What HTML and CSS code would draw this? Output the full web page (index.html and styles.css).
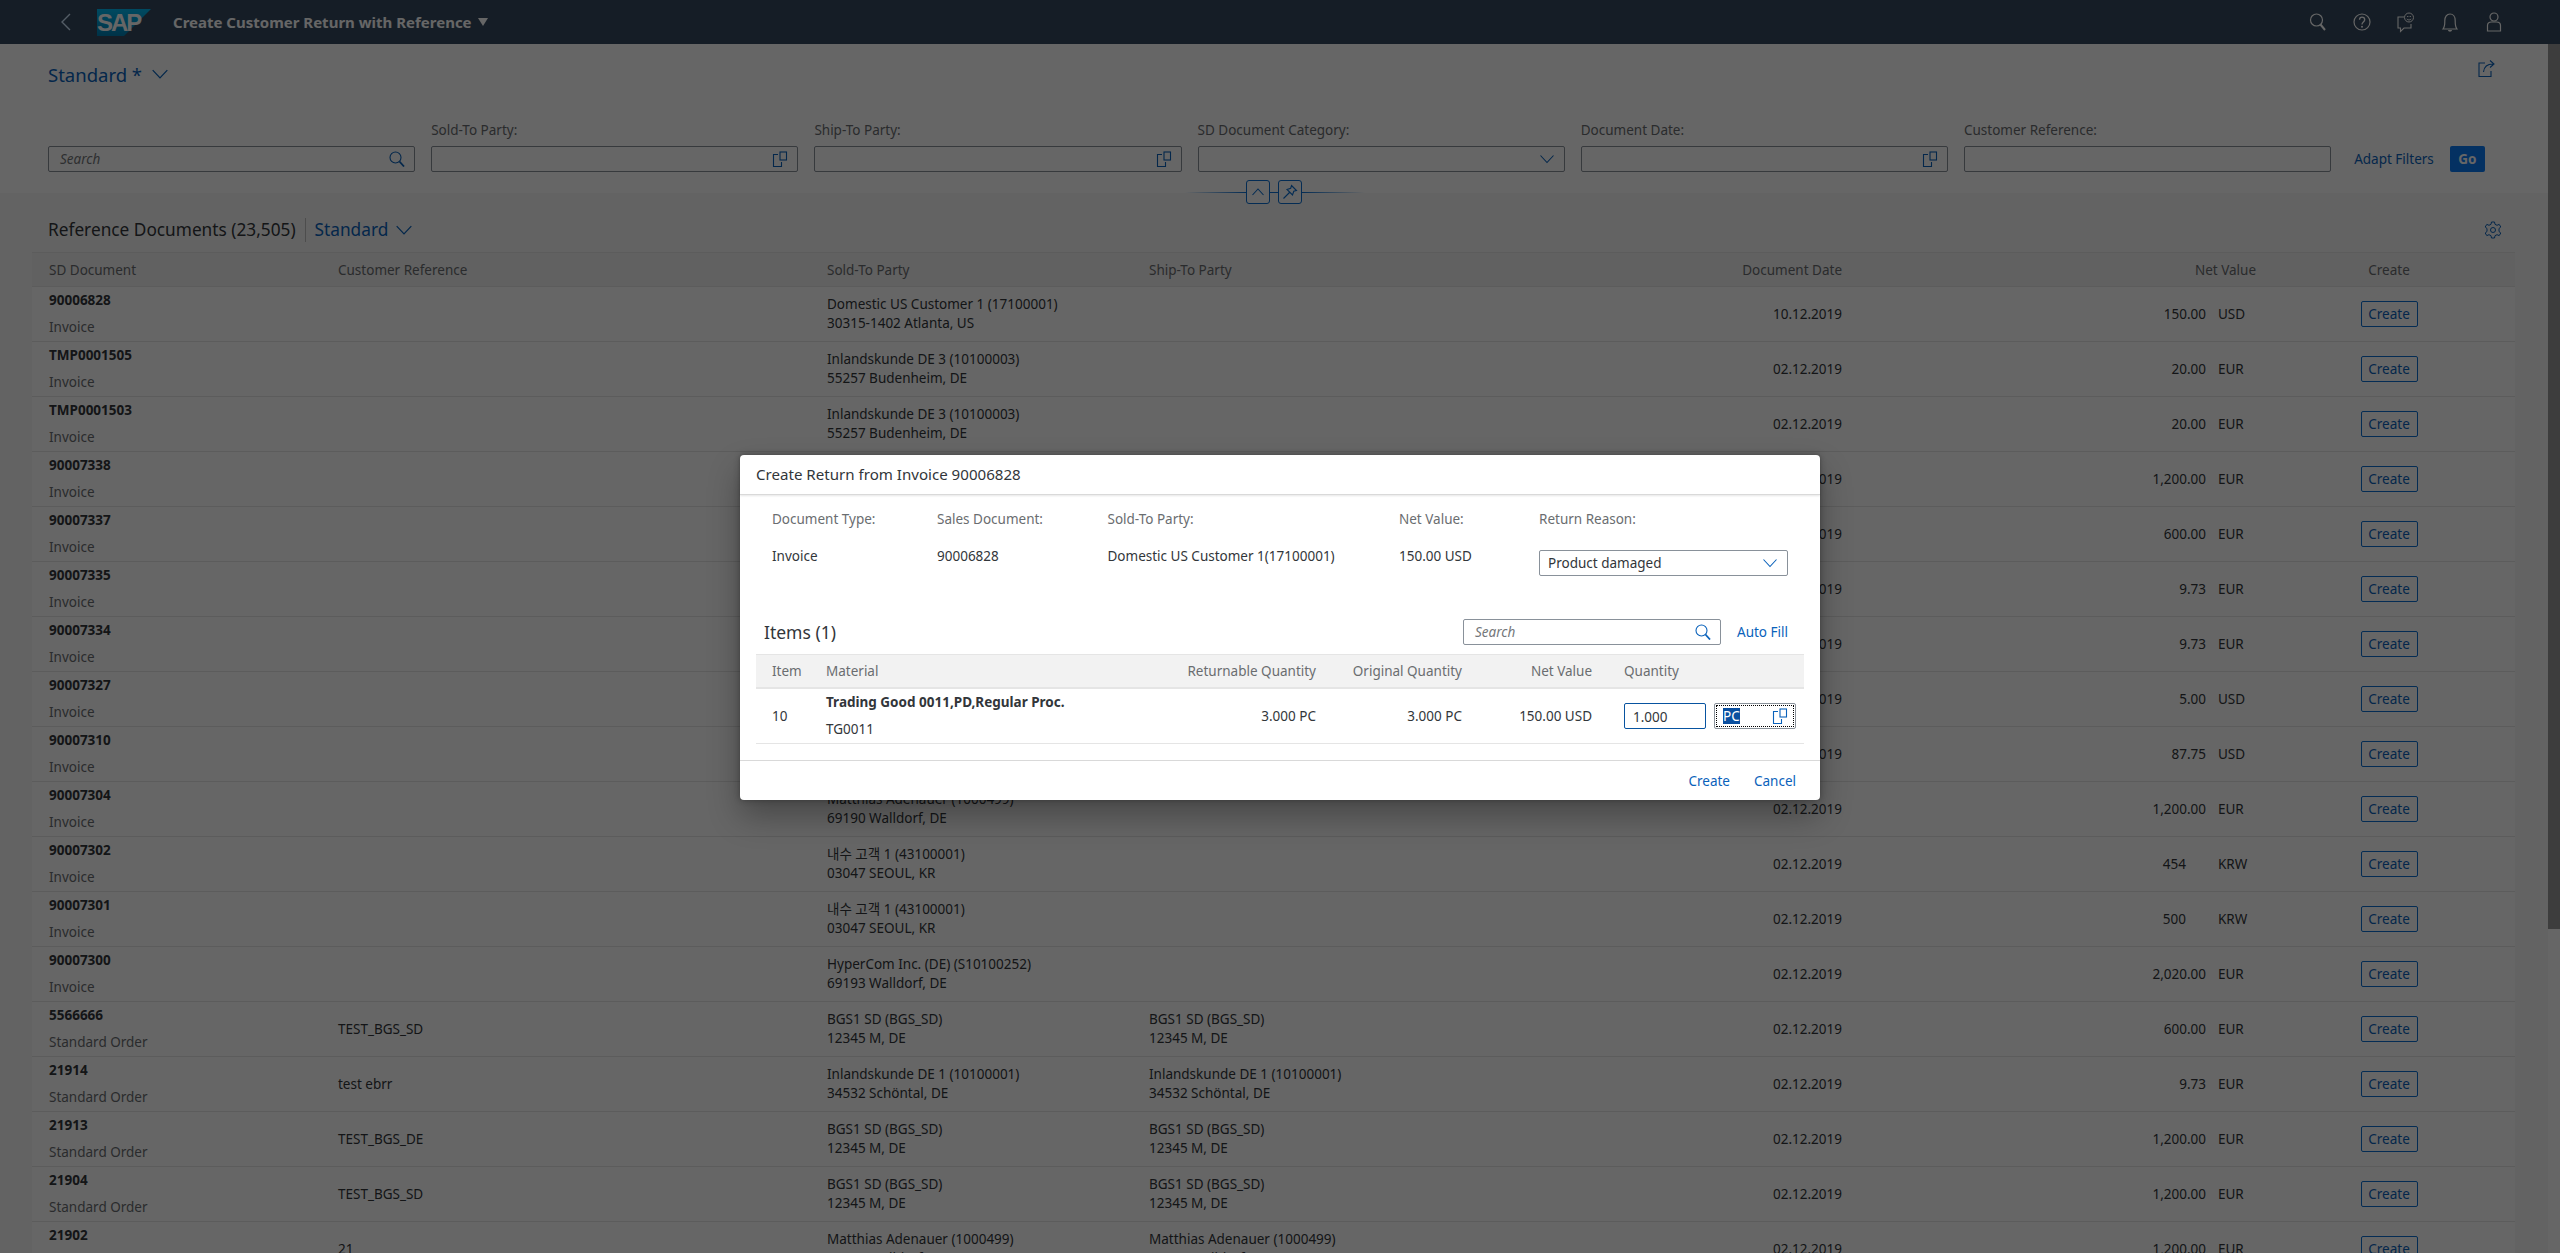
FILE: index.html
```html
<!DOCTYPE html>
<html lang="en">
<head>
  <meta charset="UTF-8" />
  <title>Create Customer Return with Reference</title>
  <link rel="stylesheet" href="styles.css">
</head>
<body>
  <svg class="sprites" width="0" height="0">
    <symbol id="i-search" viewBox="0 0 16 16"><circle cx="6.5" cy="6.5" r="5.5" fill="none" stroke="currentColor" stroke-width="1.1"/><path d="M10.5 10.5 15 15.5" stroke="currentColor" stroke-width="1.8" fill="none"/></symbol>
    <symbol id="i-vh" viewBox="0 0 16 16"><path d="M6 3.5H1.500V15.500H9.500V11" fill="none" stroke="currentColor" stroke-width="1.1"/><rect x="8" y="1" width="6.500" height="8" fill="none" stroke="currentColor" stroke-width="1.1"/></symbol>
    <symbol id="i-down" viewBox="0 0 16 16"><path d="M1.500 4.500 8 11.500 14.500 4.500" fill="none" stroke="currentColor" stroke-width="1.1"/></symbol>
  </svg>

  <header class="shell">
    <svg class="shell-back" width="12" height="20" viewBox="0 0 12 20"><path d="M10 2 2 10 10 18" fill="none" stroke="currentColor" stroke-width="1.4"/></svg>
    <div class="sap-logo">
      <svg width="54" height="27" viewBox="0 0 54 27"><defs><linearGradient id="sap-fill" x1="0" y1="0" x2="0" y2="1"><stop offset="0" stop-color="#00b8f1"/><stop offset="1" stop-color="#007fb3"/></linearGradient></defs><polygon points="0,0 54,0 27,27 0,27" fill="url(#sap-fill)"/></svg>
      <span class="sap-text">SAP</span>
    </div>
    <span class="shell-title">Create Customer Return with Reference</span>
    <svg class="shell-caret" width="10" height="8" viewBox="0 0 10 8"><polygon points="0,0 10,0 5,8" fill="currentColor"/></svg>
    <div class="shell-icons">
      <svg width="18" height="22" viewBox="0 0 18 22"><circle cx="7.500" cy="9" r="6" fill="none" stroke="currentColor" stroke-width="1.200"/><path d="M11.500 13.500 16 19" stroke="currentColor" stroke-width="2" fill="none"/></svg>
      <svg width="18" height="22" viewBox="0 0 18 22"><circle cx="9" cy="11" r="8" fill="none" stroke="currentColor" stroke-width="1.200"/><path d="M6.500 8.800C6.600 7 7.700 6.200 9 6.200c1.600 0 2.700 1 2.700 2.500 0 2.200-2.700 2.400-2.700 4.700" fill="none" stroke="currentColor" stroke-width="1.300"/><circle cx="9" cy="15.700" r="1" fill="currentColor"/></svg>
      <svg width="18" height="22" viewBox="0 0 18 22"><path d="M7 6H1V17H3.500V20.500L7 17H14V13" fill="none" stroke="currentColor" stroke-width="1.100"/><circle cx="12" cy="6.500" r="4.500" fill="#354a5f" stroke="currentColor" stroke-width="1"/><path d="M9.800 8c1.400 1.300 3 1.300 4.400 0M10 5.500h1.400M12.600 5.500h1.400" fill="none" stroke="currentColor" stroke-width=".9"/></svg>
      <svg width="18" height="22" viewBox="0 0 18 22"><path d="M2 18C4 15.500 3.800 12.500 3.800 9.500 3.800 6 5.800 3 9 3s5.200 3 5.200 6.500c0 3-.2 6 1.800 8.500Z" fill="none" stroke="currentColor" stroke-width="1.200"/><path d="M7 19c0 2.300 4 2.300 4 0" fill="currentColor"/></svg>
      <svg width="18" height="22" viewBox="0 0 18 22"><circle cx="9" cy="6" r="4" fill="none" stroke="currentColor" stroke-width="1.200"/><path d="M2.500 20V14.500C2.500 12 4.500 11 6.500 11H11.500C13.500 11 15.500 12 15.500 14.500V20Z" fill="none" stroke="currentColor" stroke-width="1.200"/></svg>
    </div>
  </header>

  <main class="page">
    <section class="filterbar">
      <div class="variant-row">
        <span class="variant">Standard *</span>
        <svg class="ic-blue variant-chev"><use href="#i-down"/></svg>
        <svg class="share" width="18" height="20" viewBox="0 0 18 20"><path d="M7 5H1V18.500H13V13" fill="none" stroke="currentColor" stroke-width="1.100"/><path d="M5.500 14C6 9 9 6 15 6M12 2.500 16 6 12 9.500" fill="none" stroke="currentColor" stroke-width="1.100"/></svg>
      </div>
      <div class="filters">
        <div class="filter">
          <label>&nbsp;</label>
          <div class="field"><span class="placeholder">Search</span><svg class="ic-blue ic14"><use href="#i-search"/></svg></div>
        </div>
        <div class="filter">
          <label>Sold-To Party:</label>
          <div class="field"><svg class="ic-blue ic14"><use href="#i-vh"/></svg></div>
        </div>
        <div class="filter">
          <label>Ship-To Party:</label>
          <div class="field"><svg class="ic-blue ic14"><use href="#i-vh"/></svg></div>
        </div>
        <div class="filter">
          <label>SD Document Category:</label>
          <div class="field"><svg class="ic-blue ic14"><use href="#i-down"/></svg></div>
        </div>
        <div class="filter">
          <label>Document Date:</label>
          <div class="field"><svg class="ic-blue ic14"><use href="#i-vh"/></svg></div>
        </div>
        <div class="filter">
          <label>Customer Reference:</label>
          <div class="field"></div>
        </div>
        <div class="filter-actions">
          <a class="link">Adapt Filters</a>
          <button class="go">Go</button>
        </div>
      </div>
      <div class="collapse">
        <span class="collapse-line left"></span>
        <button class="collapse-btn"><svg width="14" height="10" viewBox="0 0 14 10"><path d="M1.500 8 7 2 12.500 8" fill="none" stroke="currentColor" stroke-width="1.100"/></svg></button>
        <span class="collapse-line mid"></span>
        <button class="collapse-btn"><svg width="16" height="16" viewBox="0 0 16 16"><path d="M9.500 1.500 14.500 6.500 11.800 7.300 10.500 11 5 5.500 8.700 4.200ZM7.500 8.500 1.500 14.500" fill="none" stroke="currentColor" stroke-width="1.100"/></svg></button>
        <span class="collapse-line right"></span>
      </div>
    </section>

    <section class="docs">
      <div class="docs-toolbar">
        <h2 class="docs-title">Reference Documents (23,505)</h2>
        <span class="docs-sep"></span>
        <span class="docs-variant">Standard</span>
        <svg class="ic-blue docs-chev"><use href="#i-down"/></svg>
        <svg class="gear" width="18" height="18" viewBox="0 0 18 18"><circle cx="9" cy="9" r="2.500" fill="none" stroke="currentColor" stroke-width="1"/><path d="M7.500 1H10.500L11 3.300 13 4.300 15.200 3.400 16.800 6 15 7.500V10.500L16.800 12 15.200 14.600 13 13.700 11 14.700 10.500 17H7.500L7 14.700 5 13.700 2.800 14.600 1.200 12 3 10.500V7.500L1.200 6 2.800 3.400 5 4.300 7 3.300Z" fill="none" stroke="currentColor" stroke-width="1"/></svg>
      </div>

      <div class="table">
        <div class="tr th">
          <div class="td">SD Document</div><div class="td">Customer Reference</div><div class="td">Sold-To Party</div><div class="td">Ship-To Party</div><div class="td right">Document Date</div><div class="td right">Net Value</div><div class="td center">Create</div>
        </div>

        <div class="tr">
          <div class="td doc"><b>90006828</b><span>Invoice</span></div><div class="td"></div>
          <div class="td party">Domestic US Customer 1 (17100001)<br>30315-1402 Atlanta, US</div><div class="td party"></div>
          <div class="td right">10.12.2019</div>
          <div class="td value"><span class="num">150.00</span><span class="cur">USD</span></div>
          <div class="td center"><button class="create">Create</button></div>
        </div>
        <div class="tr">
          <div class="td doc"><b>TMP0001505</b><span>Invoice</span></div><div class="td"></div>
          <div class="td party">Inlandskunde DE 3 (10100003)<br>55257 Budenheim, DE</div><div class="td party"></div>
          <div class="td right">02.12.2019</div>
          <div class="td value"><span class="num">20.00</span><span class="cur">EUR</span></div>
          <div class="td center"><button class="create">Create</button></div>
        </div>
        <div class="tr">
          <div class="td doc"><b>TMP0001503</b><span>Invoice</span></div><div class="td"></div>
          <div class="td party">Inlandskunde DE 3 (10100003)<br>55257 Budenheim, DE</div><div class="td party"></div>
          <div class="td right">02.12.2019</div>
          <div class="td value"><span class="num">20.00</span><span class="cur">EUR</span></div>
          <div class="td center"><button class="create">Create</button></div>
        </div>
        <div class="tr">
          <div class="td doc"><b>90007338</b><span>Invoice</span></div><div class="td"></div>
          <div class="td party"></div><div class="td party"></div>
          <div class="td right">02.12.2019</div>
          <div class="td value"><span class="num">1,200.00</span><span class="cur">EUR</span></div>
          <div class="td center"><button class="create">Create</button></div>
        </div>
        <div class="tr">
          <div class="td doc"><b>90007337</b><span>Invoice</span></div><div class="td"></div>
          <div class="td party"></div><div class="td party"></div>
          <div class="td right">02.12.2019</div>
          <div class="td value"><span class="num">600.00</span><span class="cur">EUR</span></div>
          <div class="td center"><button class="create">Create</button></div>
        </div>
        <div class="tr">
          <div class="td doc"><b>90007335</b><span>Invoice</span></div><div class="td"></div>
          <div class="td party"></div><div class="td party"></div>
          <div class="td right">02.12.2019</div>
          <div class="td value"><span class="num">9.73</span><span class="cur">EUR</span></div>
          <div class="td center"><button class="create">Create</button></div>
        </div>
        <div class="tr">
          <div class="td doc"><b>90007334</b><span>Invoice</span></div><div class="td"></div>
          <div class="td party"></div><div class="td party"></div>
          <div class="td right">02.12.2019</div>
          <div class="td value"><span class="num">9.73</span><span class="cur">EUR</span></div>
          <div class="td center"><button class="create">Create</button></div>
        </div>
        <div class="tr">
          <div class="td doc"><b>90007327</b><span>Invoice</span></div><div class="td"></div>
          <div class="td party"></div><div class="td party"></div>
          <div class="td right">02.12.2019</div>
          <div class="td value"><span class="num">5.00</span><span class="cur">USD</span></div>
          <div class="td center"><button class="create">Create</button></div>
        </div>
        <div class="tr">
          <div class="td doc"><b>90007310</b><span>Invoice</span></div><div class="td"></div>
          <div class="td party"></div><div class="td party"></div>
          <div class="td right">02.12.2019</div>
          <div class="td value"><span class="num">87.75</span><span class="cur">USD</span></div>
          <div class="td center"><button class="create">Create</button></div>
        </div>
        <div class="tr">
          <div class="td doc"><b>90007304</b><span>Invoice</span></div><div class="td"></div>
          <div class="td party">Matthias Adenauer (1000499)<br>69190 Walldorf, DE</div><div class="td party"></div>
          <div class="td right">02.12.2019</div>
          <div class="td value"><span class="num">1,200.00</span><span class="cur">EUR</span></div>
          <div class="td center"><button class="create">Create</button></div>
        </div>
        <div class="tr">
          <div class="td doc"><b>90007302</b><span>Invoice</span></div><div class="td"></div>
          <div class="td party">내수 고객 1 (43100001)<br>03047 SEOUL, KR</div><div class="td party"></div>
          <div class="td right">02.12.2019</div>
          <div class="td value"><span class="num whole">454</span><span class="cur">KRW</span></div>
          <div class="td center"><button class="create">Create</button></div>
        </div>
        <div class="tr">
          <div class="td doc"><b>90007301</b><span>Invoice</span></div><div class="td"></div>
          <div class="td party">내수 고객 1 (43100001)<br>03047 SEOUL, KR</div><div class="td party"></div>
          <div class="td right">02.12.2019</div>
          <div class="td value"><span class="num whole">500</span><span class="cur">KRW</span></div>
          <div class="td center"><button class="create">Create</button></div>
        </div>
        <div class="tr">
          <div class="td doc"><b>90007300</b><span>Invoice</span></div><div class="td"></div>
          <div class="td party">HyperCom Inc. (DE) (S10100252)<br>69193 Walldorf, DE</div><div class="td party"></div>
          <div class="td right">02.12.2019</div>
          <div class="td value"><span class="num">2,020.00</span><span class="cur">EUR</span></div>
          <div class="td center"><button class="create">Create</button></div>
        </div>
        <div class="tr">
          <div class="td doc"><b>5566666</b><span>Standard Order</span></div><div class="td">TEST_BGS_SD</div>
          <div class="td party">BGS1 SD (BGS_SD)<br>12345 M, DE</div><div class="td party">BGS1 SD (BGS_SD)<br>12345 M, DE</div>
          <div class="td right">02.12.2019</div>
          <div class="td value"><span class="num">600.00</span><span class="cur">EUR</span></div>
          <div class="td center"><button class="create">Create</button></div>
        </div>
        <div class="tr">
          <div class="td doc"><b>21914</b><span>Standard Order</span></div><div class="td">test ebrr</div>
          <div class="td party">Inlandskunde DE 1 (10100001)<br>34532 Schöntal, DE</div><div class="td party">Inlandskunde DE 1 (10100001)<br>34532 Schöntal, DE</div>
          <div class="td right">02.12.2019</div>
          <div class="td value"><span class="num">9.73</span><span class="cur">EUR</span></div>
          <div class="td center"><button class="create">Create</button></div>
        </div>
        <div class="tr">
          <div class="td doc"><b>21913</b><span>Standard Order</span></div><div class="td">TEST_BGS_DE</div>
          <div class="td party">BGS1 SD (BGS_SD)<br>12345 M, DE</div><div class="td party">BGS1 SD (BGS_SD)<br>12345 M, DE</div>
          <div class="td right">02.12.2019</div>
          <div class="td value"><span class="num">1,200.00</span><span class="cur">EUR</span></div>
          <div class="td center"><button class="create">Create</button></div>
        </div>
        <div class="tr">
          <div class="td doc"><b>21904</b><span>Standard Order</span></div><div class="td">TEST_BGS_SD</div>
          <div class="td party">BGS1 SD (BGS_SD)<br>12345 M, DE</div><div class="td party">BGS1 SD (BGS_SD)<br>12345 M, DE</div>
          <div class="td right">02.12.2019</div>
          <div class="td value"><span class="num">1,200.00</span><span class="cur">EUR</span></div>
          <div class="td center"><button class="create">Create</button></div>
        </div>
        <div class="tr">
          <div class="td doc"><b>21902</b><span>Standard Order</span></div><div class="td">21</div>
          <div class="td party">Matthias Adenauer (1000499)<br>69190 Walldorf, DE</div><div class="td party">Matthias Adenauer (1000499)<br>69190 Walldorf, DE</div>
          <div class="td right">02.12.2019</div>
          <div class="td value"><span class="num">1,200.00</span><span class="cur">EUR</span></div>
          <div class="td center"><button class="create">Create</button></div>
        </div>
      </div>
    </section>
  </main>

  <div class="scrollbar"><div class="scroll-thumb"></div></div>
  <div class="backdrop"></div>

  <div class="dialog">
    <div class="dlg-header">Create Return from Invoice 90006828</div>
    <div class="dlg-body">
      <div class="dlg-form">
        <div class="dlg-col c1"><span class="dlg-label">Document Type:</span><span class="dlg-val">Invoice</span></div>
        <div class="dlg-col c2"><span class="dlg-label">Sales Document:</span><span class="dlg-val">90006828</span></div>
        <div class="dlg-col c3"><span class="dlg-label">Sold-To Party:</span><span class="dlg-val">Domestic US Customer 1(17100001)</span></div>
        <div class="dlg-col c4"><span class="dlg-label">Net Value:</span><span class="dlg-val">150.00 USD</span></div>
        <div class="dlg-col c5">
          <span class="dlg-label">Return Reason:</span>
          <div class="dlg-select"><span>Product damaged</span><svg class="ic-dlg ic14"><use href="#i-down"/></svg></div>
        </div>
      </div>
      <div class="items-bar">
        <span class="items-title">Items (1)</span>
        <div class="dlg-search"><span class="placeholder">Search</span><svg class="ic-dlg ic14"><use href="#i-search"/></svg></div>
        <a class="dlg-link">Auto Fill</a>
      </div>
      <div class="items">
        <div class="it-row it-head">
          <div>Item</div><div>Material</div><div class="right">Returnable Quantity</div><div class="right">Original Quantity</div><div class="right">Net Value</div><div>Quantity</div>
        </div>
        <div class="it-row">
          <div>10</div>
          <div class="it-mat"><b>Trading Good 0011,PD,Regular Proc.</b><span>TG0011</span></div>
          <div class="right">3.000 PC</div>
          <div class="right">3.000 PC</div>
          <div class="right">150.00 USD</div>
          <div class="it-inputs">
            <div class="qty">1.000</div>
            <div class="unit"><div class="unit-focus"><span class="unit-sel">PC</span><svg class="ic-dlg ic14"><use href="#i-vh"/></svg></div></div>
          </div>
        </div>
      </div>
    </div>
    <div class="dlg-footer">
      <a class="dlg-link">Create</a>
      <a class="dlg-link">Cancel</a>
    </div>
  </div>
</body>
</html>
```

FILE: styles.css
```css
* {
  box-sizing: border-box;
}

html, body {
  margin: 0;
  height: 1253px;
  overflow: hidden;
}

body {
  font-family: "Noto Sans", "Noto Sans CJK KR", sans-serif;
  font-size: 13.5px;
  color: #32363a;
  background-color: #f7f7f7;
  position: relative;
}

.sprites {
  position: absolute;
}

b {
  font-weight: 700;
}

.right { text-align: right; }
.center { text-align: center; }

.ic-blue {
  color: #0a62bb;
  fill: none;
}

.ic-dlg {
  color: #0a62bb;
}

.ic14 {
  width: 16px;
  height: 16px;
  flex: none;
}

/* shell */
.shell {
  height: 44px;
  background-color: #354a5f;
  color: #d1e8ff;
  display: flex;
  align-items: center;
  padding-left: 60px;
}

.shell-back {
  flex: none;
  margin-right: 25px;
}

.sap-logo {
  position: relative;
  width: 54px;
  height: 27px;
  flex: none;
  margin-right: 22px;
}

.sap-logo svg {
  display: block;
}

.sap-text {
  position: absolute;
  left: 0;
  top: 1px;
  font: 700 24px/25px "Liberation Sans", sans-serif;
  letter-spacing: -2px;
  color: #fff;
}

.shell-title {
  font-weight: 700;
  font-size: 15px;
  color: #fff;
}

.shell-caret {
  margin-left: 6px;
  color: #fff;
}

.shell-icons {
  margin-left: auto;
  display: flex;
  gap: 26px;
  padding-right: 57px;
  color: #fff;
}

/* filter bar */
.filterbar {
  height: 149px;
  background-color: #fff;
  padding: 0 48px;
  position: relative;
}

.variant-row {
  height: 60px;
  display: flex;
  align-items: center;
}

.variant {
  font-size: 18.5px;
  color: #0a62bb;
}

.variant-chev {
  width: 18px;
  height: 18px;
  margin-left: 9px;
}

.share {
  color: #0a62bb;
  margin-left: auto;
  margin-right: 16px;
  margin-top: -12px;
}

.filters {
  display: flex;
  align-items: flex-end;
  gap: 16px;
  margin-top: 16px;
}

.filter {
  width: 367.200px;
  flex: none;
}

.filter label {
  display: block;
  height: 26px;
  font-size: 13.5px;
  line-height: 20px;
  color: #6a6d70;
}

.field {
  height: 26px;
  border: 1px solid #89919a;
  border-radius: 2px;
  background-color: #fff;
  display: flex;
  align-items: center;
  justify-content: flex-end;
  padding: 0 9px;
}

.placeholder {
  font-style: italic;
  color: #74777a;
  margin-right: auto;
  padding-left: 2px;
}

.filter-actions {
  display: flex;
  align-items: center;
  gap: 16px;
  padding-left: 7px;
}

.link {
  color: #0a62bb;
}

.go {
  width: 35px;
  height: 26px;
  border: none;
  border-radius: 2px;
  padding: 0;
  background-color: #0a7af5;
  color: #fff;
  font: 700 13.5px "Noto Sans", sans-serif;
}

.collapse {
  position: absolute;
  left: 1185px;
  top: 136px;
  display: flex;
  align-items: center;
  width: 180px;
}

.collapse-line {
  height: 1px;
  flex: 1;
  background-color: #0a6ed1;
}

.collapse-line.left {
  flex: none;
  width: 61px;
  background: linear-gradient(to right, transparent, #0a6ed1);
}

.collapse-line.mid {
  flex: none;
  width: 8px;
}

.collapse-line.right {
  background: linear-gradient(to right, #0a6ed1, transparent);
}

.collapse-btn {
  width: 24px;
  height: 24px;
  padding: 0;
  flex: none;
  border: 1px solid #0a6ed1;
  border-radius: 3px;
  background-color: #fff;
  color: #0a6ed1;
  display: flex;
  align-items: center;
  justify-content: center;
}

/* table */
.docs-toolbar {
  height: 59px;
  display: flex;
  align-items: center;
  padding: 14px 48px 0;
}

.docs-title {
  margin: 0;
  font-size: 17.250px;
  font-weight: 400;
}

.docs-sep {
  width: 1px;
  height: 24px;
  background-color: #c0c0c0;
  margin: 0 9px;
}

.docs-variant {
  font-size: 17.250px;
  color: #0a62bb;
}

.docs-chev {
  width: 18px;
  height: 18px;
  margin-left: 7px;
}

.gear {
  margin-left: auto;
  margin-right: 10px;
  color: #0a62bb;
}

.table {
  margin-left: 32px;
  width: 2483px;
  border-top: 1px solid #e5e5e5;
}

.tr {
  display: grid;
  grid-template-columns: 289px 489px 322px 380px 347px 414px 232px;
  height: 55px;
  background-color: #fff;
  border-bottom: 1px solid #e5e5e5;
  align-items: center;
}

.th {
  height: 34px;
  background-color: #f2f2f2;
  color: #6a6d70;
  font-size: 13.5px;
}

.td {
  padding: 0 17px;
  white-space: nowrap;
}

.doc b,
.doc span {
  display: block;
  line-height: 27px;
}

.doc span {
  color: #6a6d70;
}

.party {
  line-height: 19px;
}

.value {
  display: flex;
  justify-content: flex-end;
  gap: 12px;
}

.cur {
  width: 38px;
}

.num.whole {
  padding-right: 20px;
}

.create {
  height: 26px;
  width: 57px;
  padding: 0;
  border: 1px solid #0a6ed1;
  border-radius: 2px;
  background-color: #fff;
  color: #0a62bb;
  font: 13.5px "Noto Sans", sans-serif;
}

.scrollbar {
  position: absolute;
  right: 0;
  top: 44px;
  bottom: 0;
  width: 12px;
  background-color: #fff;
}

.scroll-thumb {
  height: 885px;
  background-color: #9a9a9a;
}

/* dialog */
.backdrop {
  position: absolute;
  inset: 0;
  background-color: rgba(0, 0, 0, 0.6);
}

.dialog {
  position: absolute;
  left: 740px;
  top: 455px;
  width: 1080px;
  height: 345px;
  background-color: #fff;
  border-radius: 4px;
  box-shadow: 0 16px 32px rgba(0, 0, 0, 0.3), 0 0 6px rgba(0, 0, 0, 0.3);
  display: flex;
  flex-direction: column;
}

.dlg-header {
  height: 40px;
  padding: 0 16px 2px;
  display: flex;
  align-items: center;
  font-size: 15.100px;
  border-bottom: 1px solid #d9d9d9;
  box-shadow: 0 1px 2px rgba(0, 0, 0, 0.1);
}

.dlg-body {
  flex: 1;
}

.dlg-form {
  display: grid;
  grid-template-columns: 165px 170.500px 291.500px 140px 1fr;
  padding: 14px 32px 0;
  height: 114px;
}

.dlg-col {
  display: flex;
  flex-direction: column;
}

.dlg-label {
  line-height: 20px;
  color: #6a6d70;
  margin-bottom: 17px;
}

.dlg-val {
  line-height: 20px;
}

.dlg-select {
  width: 249px;
  height: 26px;
  border: 1px solid #89919a;
  border-radius: 2px;
  display: flex;
  align-items: center;
  justify-content: space-between;
  padding: 0 9px 0 8px;
  margin-top: 4px;
}

.items-bar {
  display: flex;
  align-items: center;
  height: 45px;
  padding: 0 32px 0 24px;
}

.items-title {
  font-size: 17.5px;
  margin-right: auto;
}

.dlg-search {
  width: 258px;
  height: 26px;
  border: 1px solid #89919a;
  border-radius: 2px;
  display: flex;
  align-items: center;
  padding: 0 9px;
}

.dlg-link {
  color: #0a62bb;
}

.items-bar .dlg-link {
  margin-left: 16px;
}

.items {
  margin: 0 16px;
}

.it-row {
  display: grid;
  grid-template-columns: 54px 300px 190px 146px 130px 1fr;
  align-items: center;
  height: 55px;
  padding-left: 16px;
  border-bottom: 1px solid #e5e5e5;
}

.it-head {
  height: 35px;
  background-color: #f2f2f2;
  color: #6a6d70;
  border-top: 1px solid #e5e5e5;
  border-bottom: 2px solid #e5e5e5;
}

.it-row > :last-child {
  padding-left: 32px;
}

.it-mat b,
.it-mat span {
  display: block;
  line-height: 27px;
}

.it-inputs {
  display: flex;
  gap: 8px;
}

.qty {
  width: 82px;
  height: 26px;
  border: 1px solid #0854a0;
  border-radius: 2px;
  line-height: 26px;
  padding-left: 8px;
}

.unit {
  width: 82px;
  height: 26px;
  border: 1px solid #89919a;
  border-radius: 2px;
  padding: 1px;
}

.unit-focus {
  height: 22px;
  border: 1px dotted #000;
  display: flex;
  align-items: center;
  justify-content: space-between;
  padding: 0 5px 0 6px;
}

.unit-sel {
  background-color: #0a4fa0;
  color: #fff;
  line-height: 16px;
}

.dlg-footer {
  height: 40px;
  border-top: 1px solid #d9d9d9;
  display: flex;
  justify-content: flex-end;
  align-items: center;
  gap: 24px;
  padding-right: 24px;
}
```
